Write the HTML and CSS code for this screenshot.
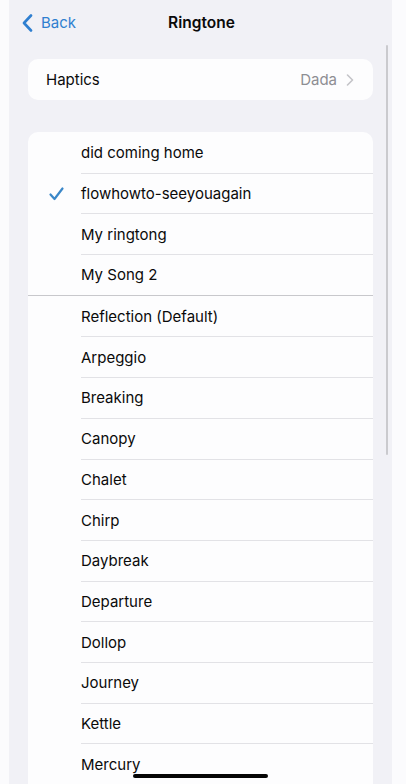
FILE: index.html
```html
<!DOCTYPE html>
<html lang="en">
<head>
  <meta charset="UTF-8" />
  <meta name="viewport" content="width=device-width, initial-scale=1" />
  <title>Ringtone</title>
  <link rel="stylesheet" href="styles.css">
</head>
<body>
  <div class="screen">
    <div class="nav">
      <a class="back" href="#">
        <svg width="11" height="18" viewBox="0 0 11 18"><path d="M9 1.5 L2 9 L9 16.5" fill="none" stroke="#2f7fd0" stroke-width="2.6" stroke-linecap="round" stroke-linejoin="round"/></svg>
        <span>Back</span>
      </a>
      <div class="title">Ringtone</div>
    </div>

    <div class="card haptics">
      <span>Haptics</span>
      <span class="value">Dada
        <svg width="8" height="12" viewBox="0 0 8 12"><path d="M1.5 1 L6.5 6 L1.5 11" fill="none" stroke="#c4c4c8" stroke-width="1.6" stroke-linecap="round" stroke-linejoin="round"/></svg>
      </span>
    </div>

    <div class="card list">
      <div class="row"><span class="check"></span><span class="name">did coming home</span></div>
      <div class="row"><span class="check">
        <svg width="15" height="14" viewBox="0 0 15 14"><path d="M1.5 7.5 L5.5 12 L13.5 1.5" fill="none" stroke="#3a87c8" stroke-width="2.2" stroke-linecap="round" stroke-linejoin="round"/></svg>
      </span><span class="name">flowhowto-seeyouagain</span></div>
      <div class="row"><span class="check"></span><span class="name">My ringtong</span></div>
      <div class="row"><span class="check"></span><span class="name">My Song 2</span></div>
    </div>

    <div class="card list tones">
      <div class="row"><span class="check"></span><span class="name">Reflection (Default)</span></div>
      <div class="row"><span class="check"></span><span class="name">Arpeggio</span></div>
      <div class="row"><span class="check"></span><span class="name">Breaking</span></div>
      <div class="row"><span class="check"></span><span class="name">Canopy</span></div>
      <div class="row"><span class="check"></span><span class="name">Chalet</span></div>
      <div class="row"><span class="check"></span><span class="name">Chirp</span></div>
      <div class="row"><span class="check"></span><span class="name">Daybreak</span></div>
      <div class="row"><span class="check"></span><span class="name">Departure</span></div>
      <div class="row"><span class="check"></span><span class="name">Dollop</span></div>
      <div class="row"><span class="check"></span><span class="name">Journey</span></div>
      <div class="row"><span class="check"></span><span class="name">Kettle</span></div>
      <div class="row"><span class="check"></span><span class="name">Mercury</span></div>
    </div>

    <div class="scrollbar"></div>
    <div class="home-indicator"></div>
  </div>
</body>
</html>
```

FILE: styles.css
```css
body {
  margin: 0;
  background: #fbfbfd;
  font-family: Inter, 'Liberation Sans', sans-serif;
  color: #0a0a0a;
  overflow: hidden;
}

.screen {
  position: relative;
  margin: 0 14px 0 9px;
  height: 784px;
  background: #f1f1f6;
  display: flex;
  flex-direction: column;
  padding: 0 19px;
  overflow: hidden;
}

.nav {
  height: 44px;
  display: flex;
  align-items: center;
  justify-content: center;
  position: relative;
  margin: 0 -19px;
}

.back {
  position: absolute;
  left: 13px;
  top: 13px;
  display: flex;
  align-items: center;
  gap: 8px;
  color: #2f7fd0;
  text-decoration: none;
  font-size: 15px;
}

.title {
  font-weight: 600;
  font-size: 15.5px;
  margin-left: 2px;
}

.card {
  background: #fdfdfe;
  border-radius: 10px;
}

.haptics {
  margin-top: 15px;
  height: 41px;
  display: flex;
  align-items: center;
  justify-content: space-between;
  padding: 0 19px 0 18px;
  font-size: 15px;
}

.haptics .value {
  color: #8e8e93;
  display: flex;
  align-items: center;
  gap: 9px;
}

.list {
  margin-top: 32px;
  border-radius: 10px 10px 0 0;
}

.tones {
  margin-top: 0;
  border-radius: 0;
  border-top: 1px solid #c8c8cc;
}

.row {
  height: 40.7px;
  display: flex;
  align-items: center;
  font-size: 15px;
  position: relative;
  padding-top: 1px;
  box-sizing: border-box;
}

.row + .row::before {
  content: "";
  position: absolute;
  left: 53px;
  right: 0;
  top: 0;
  border-top: 1px solid #e2e2e6;
}

.check {
  width: 53px;
  display: flex;
  justify-content: center;
  padding-left: 4px;
  box-sizing: border-box;
}

.scrollbar {
  position: absolute;
  right: 4px;
  top: 45px;
  width: 2px;
  height: 410px;
  border-radius: 1px;
  background: #cacace;
}

.home-indicator {
  position: absolute;
  left: 124px;
  bottom: 6px;
  width: 135px;
  height: 4px;
  border-radius: 2px;
  background: #050505;
}
```
